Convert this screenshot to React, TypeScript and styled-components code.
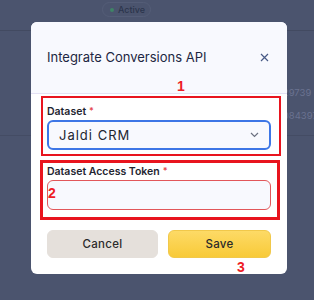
import React from 'react'
import styled, { createGlobalStyle } from 'styled-components'

const GlobalStyle = createGlobalStyle`
  html, body {
    margin: 0;
    padding: 0;
    background: #4b546e;
  }
  body {
    font-family: Inter, "Noto Sans", sans-serif;
    overflow: hidden;
  }
`

const Page = styled.div`
  position: relative;
  width: 314px;
  height: 300px;
  overflow: hidden;
  background: #4b546e;
`

const TopBar = styled.div`
  height: 28px;
  border-bottom: 1px solid #424a61;
  display: flex;
  align-items: flex-start;
  padding: 2px 0 0 102px;
  box-sizing: content-box;
`

const StatusPill = styled.div`
  display: flex;
  align-items: center;
  gap: 4px;
  height: 13px;
  padding: 0 5px 0 7px;
  border: 1px solid #545d77;
  border-radius: 8px;
  font-size: 9px;
  font-weight: 500;
  color: #2c344c;
`

const Dot = styled.span`
  width: 4px;
  height: 4px;
  border-radius: 50%;
  background: #3f8466;
`

const Rows = styled.div`
  padding: 56px 0 0 279px;
  height: 48px;
  border-bottom: 1px solid #444c64;
  display: flex;
  flex-direction: column;
  gap: 11px;
`

const Cell = styled.div`
  font-size: 9.5px;
  line-height: 12px;
  color: #6a7290;
  white-space: nowrap;
`

const Modal = styled.div`
  position: absolute;
  left: 31px;
  top: 22px;
  width: 256px;
  background: #ffffff;
  border-radius: 6px;
  overflow: visible;
`

const Header = styled.div`
  height: 72px;
  box-sizing: border-box;
  padding: 26px 18px 0 16px;
  display: flex;
  justify-content: space-between;
  align-items: flex-start;
  background: #f8f9fe;
  border-bottom: 1px solid #e4e1f4;
  border-radius: 6px 6px 0 0;
`

const Title = styled.div`
  font-size: 13px;
  line-height: 18px;
  color: #1d2742;
`

const CloseButton = styled.button`
  border: 0;
  background: none;
  padding: 0;
  margin-top: 5px;
  width: 9px;
  height: 9px;
  display: flex;
  cursor: pointer;
`

const Body = styled.div`
  padding: 10px 16px 16px;
  display: flex;
  flex-direction: column;
`

const Field = styled.div<{ $gap?: number }>`
  position: relative;
  display: flex;
  flex-direction: column;
  gap: 1px;
  margin-top: ${p => p.$gap ?? 0}px;
`

const Label = styled.div`
  font-size: 10.5px;
  line-height: 14px;
  font-weight: 600;
  color: #1f2531;
`

const Required = styled.span`
  color: #e5484d;
  font-size: 9px;
  margin-left: 3px;
  vertical-align: 1px;
`

const SelectBox = styled.div`
  height: 30px;
  box-sizing: border-box;
  border: 2px solid #3d76e6;
  border-radius: 6px;
  background: #f8f9fe;
  display: flex;
  align-items: center;
  justify-content: space-between;
  padding: 0 10px 0 10px;
  font-size: 13px;
  letter-spacing: 1px;
  color: #222630;
`

const TextInput = styled.input`
  height: 30px;
  box-sizing: border-box;
  border: 1px solid #e2575a;
  border-radius: 6px;
  background: #f8f9fe;
  outline: none;
  padding: 0 10px;
  font-family: inherit;
`

const Actions = styled.div`
  position: relative;
  margin-top: 20px;
  display: grid;
  grid-template-columns: 111px 1fr;
  gap: 10px;
`

const Button = styled.button<{ $primary?: boolean }>`
  height: 28px;
  border-radius: 6px;
  font-family: inherit;
  font-size: 11.5px;
  font-weight: 500;
  letter-spacing: 0.3px;
  color: #2a2a2a;
  cursor: pointer;
  border: 1px solid ${p => (p.$primary ? '#f1c84a' : '#e5e0db')};
  background: ${p => (p.$primary ? 'linear-gradient(#fdda66, #f8ca38)' : '#e5e0db')};
`

const Annotation = styled.div<{ $t: number; $r: number; $b: number; $l: number; $w: number }>`
  position: absolute;
  top: ${p => p.$t}px;
  right: ${p => p.$r}px;
  bottom: ${p => p.$b}px;
  left: ${p => p.$l}px;
  border: ${p => p.$w}px solid #e8141e;
  pointer-events: none;
`

const Marker = styled.span<{ $x: number; $y: number }>`
  position: absolute;
  left: ${p => p.$x}px;
  top: ${p => p.$y}px;
  font-family: "Liberation Sans", Arial, sans-serif;
  font-weight: 700;
  font-size: 14px;
  line-height: 14px;
  color: #ee1c25;
`

const Chevron = () => (
  <svg width="9" height="6" viewBox="0 0 9 6" fill="none">
    <path d="M1 1l3.5 3.5L8 1" stroke="#6b7080" strokeWidth="1.2" />
  </svg>
)

const CloseIcon = () => (
  <svg width="9" height="9" viewBox="0 0 9 9" fill="none">
    <path d="M1 1l7 7M8 1L1 8" stroke="#485a86" strokeWidth="1.2" />
  </svg>
)

const App = () => (
  <Page>
    <GlobalStyle />
    <TopBar>
      <StatusPill><Dot />Active</StatusPill>
    </TopBar>
    <Rows>
      <Cell>129739</Cell>
      <Cell>1084397</Cell>
    </Rows>

    <Modal>
      <Header>
        <Title>Integrate Conversions API</Title>
        <CloseButton><CloseIcon /></CloseButton>
      </Header>
      <Body>
        <Field>
          <Label>Dataset<Required>*</Required></Label>
          <SelectBox>
            Jaldi CRM
            <Chevron />
          </SelectBox>
          <Annotation $t={-8} $r={-10} $b={-6} $l={-6} $w={2} />
          <Marker $x={130} $y={-25}>1</Marker>
        </Field>
        <Field $gap={14}>
          <Label>Dataset Access Token<Required>*</Required></Label>
          <TextInput />
          <Annotation $t={-4} $r={-9} $b={-10} $l={-7} $w={3} />
          <Marker $x={1} $y={22}>2</Marker>
        </Field>
        <Actions>
          <Button>Cancel</Button>
          <Button $primary>Save</Button>
          <Marker $x={190} $y={30}>3</Marker>
        </Actions>
      </Body>
    </Modal>
  </Page>
)

export default App
